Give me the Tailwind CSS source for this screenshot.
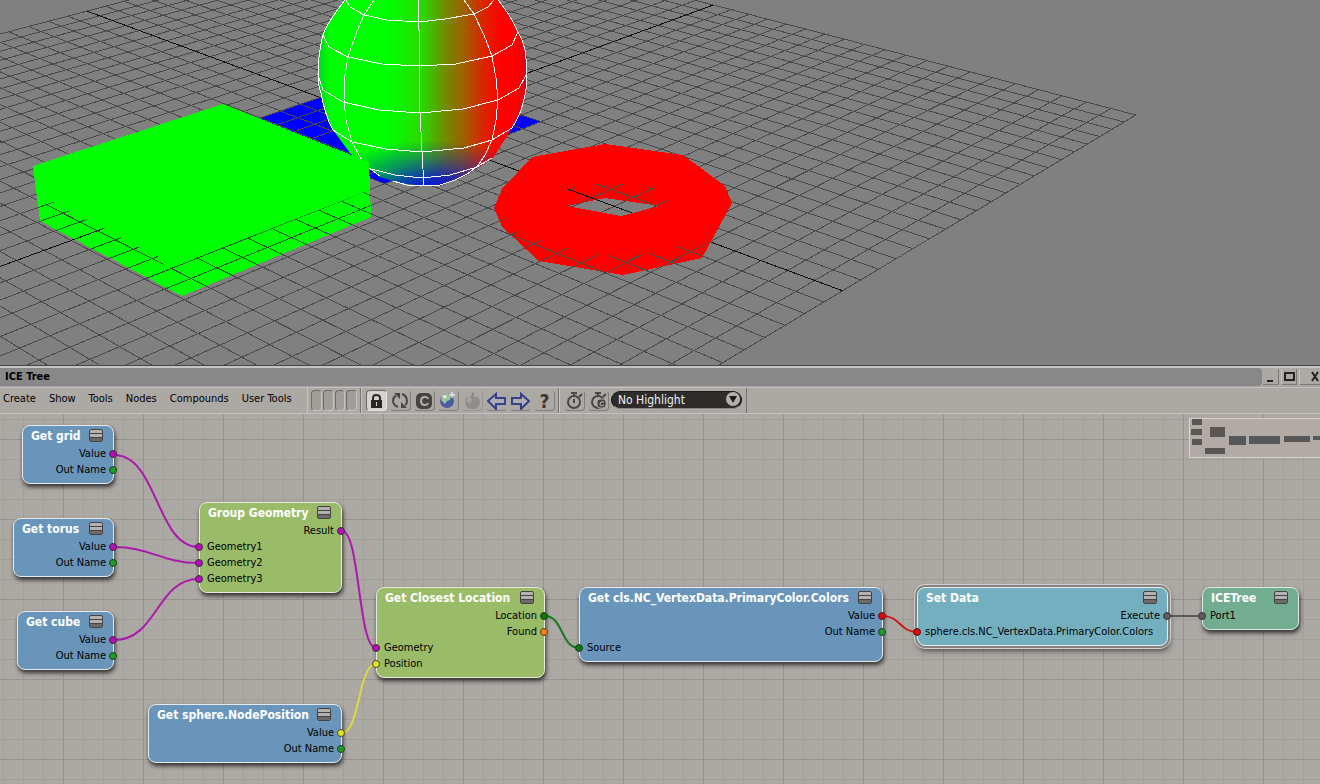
<!DOCTYPE html>
<html lang="en">
<head>
    <meta charset="UTF-8">
    <meta name="viewport" content="width=device-width, initial-scale=1.0">
    <title>ICE Tree</title>
    <script src="https://cdn.jsdelivr.net/npm/@tailwindcss/browser@4"></script>
</head>
<body class="min-h-screen flex flex-col bg-[#aca8a4] font-['DejaVu_Sans_Condensed','DejaVu_Sans',sans-serif] text-[11px] leading-4 text-black overflow-hidden">

    <!-- 3D viewport -->
    <section class="h-[365px] shrink-0 bg-[#808080] overflow-hidden">
        <svg class="block w-full h-full" role="img" aria-label="3D viewport">
            <defs>
                <linearGradient id="sphereSide" gradientUnits="userSpaceOnUse" x1="318" y1="0" x2="527" y2="0">
                    <stop offset="0" stop-color="#00d820"/>
                    <stop offset="0.06" stop-color="#00ff00"/>
                    <stop offset="0.34" stop-color="#00ff00"/>
                    <stop offset="0.5" stop-color="#2cd800"/>
                    <stop offset="0.6" stop-color="#6c9000"/>
                    <stop offset="0.7" stop-color="#a05f00"/>
                    <stop offset="0.8" stop-color="#e02000"/>
                    <stop offset="0.88" stop-color="#ff0000"/>
                    <stop offset="0.95" stop-color="#ff0000"/>
                    <stop offset="1" stop-color="#d80018"/>
                </linearGradient>
                <radialGradient id="sphereBottom" gradientUnits="userSpaceOnUse" cx="0" cy="0" r="1" gradientTransform="translate(430 194) scale(112 54)">
                    <stop offset="0" stop-color="#0000ff" stop-opacity="1"/>
                    <stop offset="0.25" stop-color="#0000f0" stop-opacity="0.8"/>
                    <stop offset="0.6" stop-color="#0000e8" stop-opacity="0.38"/>
                    <stop offset="1" stop-color="#0000e0" stop-opacity="0"/>
                </radialGradient>
                <clipPath id="overlay">
                    <!-- ground plane -->
                    <polygon points="395,72 541,122 385,184 239,125"/>
                    <!-- lower rim of the torus, and the far rim of its hole -->
                    <polygon points="497,212 520,232 567,248 600,255 643,255 680,246 708,243 702,258 623,275 539,261 502,227"/>
                    <polygon points="567,188 597,184 625,184 653,188 668,201 660,206 605,198 567,206"/>
                </clipPath>
                <clipPath id="holeClip"><polygon points="567,186 625,184 660,206 621,216 567,206"/></clipPath>
                <clipPath id="cubeFoot"><polygon points="38,206 53,202 159,257 167,269 370,190 371,217 182,296 39,221"/></clipPath>
            </defs>

            <g shape-rendering="crispEdges" fill="none">
                <path data-grid stroke="#4a4a4a"/>
                <path data-axes stroke="#101010"/>
            </g>
            <g shape-rendering="crispEdges">
                <polygon points="395,72 541,122 385,184 239,125" fill="#0000ff"/>
                <path fill="#ff0000" fill-rule="evenodd" d="M605 144 683 155 725 186 732 203 702 258 623 275 539 261 502 227 494 208 502 189 532 157ZM567 206 605 198 660 206 621 216Z"/>
            </g>
            <g clip-path="url(#overlay)" shape-rendering="crispEdges" fill="none">
                <path data-grid stroke="#4a4a4a"/>
            </g>
            <g clip-path="url(#holeClip)" shape-rendering="crispEdges" fill="none">
                <path data-axes stroke="#101010"/>
            </g>

            <g>
                <path fill="url(#sphereSide)" d="M345 0C334 14 326 26 323 35 319 50 318 62 318 75 318 84 319 88 321 93 324 110 328 121 333 130L350 153 369 168 380 177 400 183 423 186 440 186 467 175 493 158 512 128C516 121 519 116 521 110 525 98 527 88 527 77 527 66 526 58 525 50 523 42 521 37 518 32 513 20 507 11 498 0Z"/>
                <path fill="url(#sphereBottom)" d="M345 0C334 14 326 26 323 35 319 50 318 62 318 75 318 84 319 88 321 93 324 110 328 121 333 130L350 153 369 168 380 177 400 183 423 186 440 186 467 175 493 158 512 128C516 121 519 116 521 110 525 98 527 88 527 77 527 66 526 58 525 50 523 42 521 37 518 32 513 20 507 11 498 0Z"/>
                <g fill="none" stroke="#ffffff" shape-rendering="crispEdges">
                    <path d="M345 0C334 14 326 26 323 35 319 50 318 62 318 75 318 84 319 88 321 93 324 110 328 121 333 130"/>
                    <path d="M498 0C507 11 513 20 518 32 521 37 523 42 525 50 526 58 527 66 527 77 527 88 525 98 521 110 519 116 516 121 512 128"/>
                    <path d="M369 168 380 176M393 181 407 185 423 186 440 185 455 180 467 174 478 166 492 158"/>
                    <path d="M418 0 419 30 419 66 420 112 422 152 424 186"/>
                    <path d="M374 0 364 15 357 31 348 57 345 75 344 100 346 120 352 142 360 157 369 169"/>
                    <path d="M464 0 474 14 484 35 492 56 496 78 498 99 496 120 492 140 485 155 477 167"/>
                    <path d="M346 0 350 7 364 15 387 20 419 22 445 19 474 14 488 7 494 0"/>
                    <path d="M323 35 329 47 348 57 382 64 419 66 456 64 492 56 512 45 518 32"/>
                    <path d="M318 75 323 90 343 102 379 110 420 113 463 109 498 100 519 88 526 75"/>
                    <path d="M333 130 352 142 386 149 422 152 464 148 492 140 512 128"/>
                    <path d="M371 169 395 175 422 178 450 175 477 167 492 158"/>
                </g>
            </g>
            <polygon points="33,166 223,104 369,162 371,217 182,296 40,221" fill="#00ff00" shape-rendering="crispEdges"/>
            <g clip-path="url(#cubeFoot)" shape-rendering="crispEdges" fill="none">
                <path data-grid stroke="#2c5a2c"/>
                <path data-axes stroke="#101010"/>
            </g>
        </svg>
    </section>

    <!-- ICE Tree window -->
    <main class="flex-1 flex flex-col border-t border-[#4a4648]">
        <header class="flex h-[21px] shrink-0 border-t-2 border-b border-t-[#c6c3c0] border-b-[#a5a19e]">
            <h1 class="flex-1 bg-[#888888] rounded-r pl-[5px] font-bold leading-[17px]">ICE Tree</h1>
            <div class="flex gap-[2px] pl-px py-px">
                <button aria-label="Minimize" class="w-[16px] border-r border-b border-[#7d7976]">
                    <svg class="block" width="14" height="15"><path d="M4 12h6" stroke="#222" stroke-width="2"/></svg>
                </button>
                <button aria-label="Maximize" class="w-[16px] border-r border-b border-l border-[#7d7976] border-l-[#c6c3c0]">
                    <svg class="block" width="14" height="15"><path d="M3 4h9v7h-9z" fill="none" stroke="#222" stroke-width="2"/></svg>
                </button>
                <button aria-label="Close" class="w-[21px] border-l border-b border-[#7d7976] border-l-[#c6c3c0]">
                    <svg class="block" width="20" height="15"><path d="M12 3l6 9M18 3l-6 9" stroke="#222" stroke-width="2"/></svg>
                </button>
            </div>
        </header>

        <div class="flex h-[27px] shrink-0 border-t border-b border-[#c4c1be]">
            <nav class="flex w-[307px] shrink-0 gap-[13px] pl-[3px] pt-[3px]">
                <button class="h-4">Create</button>
                <button class="h-4">Show</button>
                <button class="h-4">Tools</button>
                <button class="h-4">Nodes</button>
                <button class="h-4">Compounds</button>
                <button class="h-4">User Tools</button>
            </nav>

            <div class="flex gap-px px-[3px] py-[2px] w-[54px] shrink-0 border-l border-r border-l-[#c8c5c2] border-r-[#76726f]">
                <button aria-label="Memo 1" class="flex-1 rounded-sm border border-[#6f6c69] border-r-[#c8c5c2] border-b-[#c8c5c2] bg-[#a19d99]"></button>
                <button aria-label="Memo 2" class="flex-1 rounded-sm border border-[#6f6c69] border-r-[#c8c5c2] border-b-[#c8c5c2] bg-[#a19d99]"></button>
                <button aria-label="Memo 3" class="flex-1 rounded-sm border border-[#6f6c69] border-r-[#c8c5c2] border-b-[#c8c5c2] bg-[#a19d99]"></button>
                <button aria-label="Memo 4" class="flex-1 rounded-sm border border-[#6f6c69] border-r-[#c8c5c2] border-b-[#c8c5c2] bg-[#a19d99]"></button>
            </div>

            <div class="flex gap-[3px] pl-[4px] pt-[2px] w-[198px] shrink-0 border-l border-r border-l-[#c8c5c2] border-r-[#76726f]">
                <button aria-label="Lock" class="size-[21px] rounded border border-[#6b6865] border-r-[#e6e4e2] border-b-[#e6e4e2] bg-[#d6d2cf]">
                    <svg class="block" width="19" height="19"><path d="M4 9h11v8H4z" fill="#2a2827"/><path d="M6 9V7q0-3 3-3 4 0 4 3v2" fill="none" stroke="#2a2827" stroke-width="2"/><path d="M9 11h1v4H9z" fill="#d6d2cf"/></svg>
                </button>
                <button aria-label="Refresh" class="size-[21px] rounded border border-transparent border-r-[#827e7b] border-b-[#827e7b]">
                    <svg class="block" width="19" height="19"><path d="M7 16Q2 14 2 10 2 6 5 5M11 3q5 2 5 7 0 3-2 4" fill="none" stroke="#4a4745" stroke-width="2"/><path d="M3 2h6v6zM16 17h-6v-6z" fill="#4a4745"/></svg>
                </button>
                <button aria-label="Clear" class="size-[21px] rounded border border-transparent border-r-[#827e7b] border-b-[#827e7b]">
                    <svg class="block" width="19" height="19"><rect x="1" y="2" width="16" height="16" rx="5" fill="#464341"/><path d="M13 8c-1-3-7-3-7 2s6 5 7 2" fill="none" stroke="#b2aeab" stroke-width="2"/></svg>
                </button>
                <button aria-label="Online" class="size-[21px] rounded border border-transparent border-r-[#827e7b] border-b-[#827e7b]">
                    <svg class="block" width="19" height="19"><circle cx="8" cy="10" r="7" fill="#4a5c9c"/><path d="M3 5q5-4 9 0l-1 4-3 1-2 3-4-4z" fill="#9bc49a"/><path d="M3 5q3-2 5 0l-2 3z" fill="#dcebd8"/><path d="M13 1v6M10 4h6" stroke="#fff"/></svg>
                </button>
                <button aria-label="Favorites" disabled class="size-[21px] rounded border border-transparent border-r-[#9a9693] border-b-[#9a9693]">
                    <svg class="block" width="19" height="19"><path d="M9 6Q2 4 2 10q0 7 6 8h3q6-1 6-8-1-6-8-4z" fill="#918d8a"/><path d="M9 7q0-4 2-5" fill="none" stroke="#8a8683" stroke-width="2"/><circle cx="6" cy="9" r="3" fill="#a39f9c"/></svg>
                </button>
                <button aria-label="Back" class="size-[21px] rounded border border-transparent border-b-[#827e7b]">
                    <svg class="block" width="19" height="19"><path d="M1 10l8-7v4h9v6H9v5z" fill="#aeacb4" stroke="#34408c" stroke-width="2"/></svg>
                </button>
                <button aria-label="Forward" class="size-[21px] rounded border border-transparent border-b-[#827e7b]">
                    <svg class="block" width="19" height="19"><path d="M18 10l-8-7v4H1v6h9v5z" fill="#aeacb4" stroke="#34408c" stroke-width="2"/></svg>
                </button>
                <button aria-label="Help" class="size-[21px] rounded border border-transparent border-r-[#827e7b] border-b-[#827e7b] text-[19px] leading-5 font-bold text-[#3c3937]">?</button>
            </div>

            <div class="flex pl-[4px] pt-[2px] w-[188px] shrink-0 border-l border-r border-l-[#c8c5c2] border-r-[#76726f]">
                <button aria-label="Timer" class="size-[21px] mr-[3px] rounded border border-transparent border-r-[#827e7b] border-b-[#827e7b]">
                    <svg class="block" width="19" height="19" fill="none" stroke="#4a4745"><circle cx="9" cy="11" r="6" stroke-width="2"/><path d="M9 12V8M9 5V2M6 2h6M14 6l3-3" stroke-width="2"/></svg>
                </button>
                <button aria-label="Clear timers" class="size-[21px] mr-[2px] rounded border border-transparent border-r-[#827e7b] border-b-[#827e7b]">
                    <svg class="block" width="19" height="19" fill="none" stroke="#4a4745"><circle cx="9" cy="11" r="6" stroke-width="2"/><path d="M9 5V2M6 2h6M14 6l3-3" stroke-width="2"/><rect x="8" y="8" width="9" height="9" rx="3" fill="#464341" stroke="#aca8a4"/><path d="M15 11q-4-1-4 2t4 1" stroke="#c2bebb"/></svg>
                </button>
                <div class="relative h-[18px] w-[131px] mt-px">
                    <select aria-label="Highlight" class="appearance-none block w-full h-full rounded-full bg-[#2e2c2b] border border-[#1a1918] border-b-[#8a8683] pl-[6px] pt-px text-[12px] leading-[15px] text-[#f0f0f0]">
                        <option>No Highlight</option>
                    </select>
                    <svg class="absolute right-px top-px pointer-events-none" width="15" height="15"><circle cx="7" cy="7" r="7" fill="#b4b0ad"/><path d="M3 4h8l-4 7z" fill="#1f1d1c"/></svg>
                </div>
            </div>
        </div>

        <!-- node graph -->
        <div class="relative flex-1 min-h-[370px] overflow-hidden">
            <svg class="absolute inset-0 w-full h-full">
                <defs>
                    <pattern id="minor" width="20" height="20" x="3" y="5" patternUnits="userSpaceOnUse"><path d="M0 0h20v1H1v19H0z" fill="#a29e9a"/></pattern>
                    <pattern id="major" width="80" height="80" x="63" y="25" patternUnits="userSpaceOnUse"><path d="M0 0h80v1H1v79H0z" fill="#959390"/></pattern>
                </defs>
                <rect width="100%" height="100%" fill="url(#minor)"/>
                <rect width="100%" height="100%" fill="url(#major)"/>
                <g fill="none" stroke-width="2">
                    <g stroke="#ab1bab">
                        <path d="M114 41C158 41 156 133 199 133"/>
                        <path d="M114 133C150 133 162 149 199 149"/>
                        <path d="M114 226C158 226 156 165 199 165"/>
                        <path d="M342 117C360 117 358 234 376 234"/>
                    </g>
                    <path d="M342 319C360 319 358 250 376 250" stroke="#dada3a"/>
                    <path d="M545 202C563 202 561 234 579 234" stroke="#1c7a24"/>
                    <path d="M883 202C900 202 900 218 917 218" stroke="#cc1a1a"/>
                    <path d="M1168 202H1202" stroke="#5c5a58"/>
                </g>
            </svg>

            <article class="absolute left-[22px] top-[11px] w-[92px] rounded-lg border border-[#e4eaee] bg-[#6895b9] shadow-[1px_3px_4px_#000000b0] pb-[5px]">
                <header class="flex justify-between items-start h-5 pt-[2px] pl-[8px] pr-[10px]"><h2 class="text-[12px] font-bold text-white whitespace-nowrap">Get grid</h2><svg class="shrink-0 mt-px" width="14" height="13"><use href="#menu"/></svg></header>
                <p class="relative h-4 pr-[7px] text-right">Value<i class="absolute -right-1 top-1 size-2 rounded-full border border-[#3c303c] bg-[#b80cb8]"></i></p>
                <p class="relative h-4 pr-[7px] text-right">Out Name<i class="absolute -right-1 top-1 size-2 rounded-full border border-[#234023] bg-[#1f9c28]"></i></p>
            </article>

            <article class="absolute left-[13px] top-[104px] w-[101px] rounded-lg border border-[#e4eaee] bg-[#6895b9] shadow-[1px_3px_4px_#000000b0] pb-[5px]">
                <header class="flex justify-between items-start h-5 pt-[2px] pl-[8px] pr-[10px]"><h2 class="text-[12px] font-bold text-white whitespace-nowrap">Get torus</h2><svg class="shrink-0 mt-px" width="14" height="13"><use href="#menu"/></svg></header>
                <p class="relative h-4 pr-[7px] text-right">Value<i class="absolute -right-1 top-1 size-2 rounded-full border border-[#3c303c] bg-[#b80cb8]"></i></p>
                <p class="relative h-4 pr-[7px] text-right">Out Name<i class="absolute -right-1 top-1 size-2 rounded-full border border-[#234023] bg-[#1f9c28]"></i></p>
            </article>

            <article class="absolute left-[17px] top-[197px] w-[97px] rounded-lg border border-[#e4eaee] bg-[#6895b9] shadow-[1px_3px_4px_#000000b0] pb-[5px]">
                <header class="flex justify-between items-start h-5 pt-[2px] pl-[8px] pr-[10px]"><h2 class="text-[12px] font-bold text-white whitespace-nowrap">Get cube</h2><svg class="shrink-0 mt-px" width="14" height="13"><use href="#menu"/></svg></header>
                <p class="relative h-4 pr-[7px] text-right">Value<i class="absolute -right-1 top-1 size-2 rounded-full border border-[#3c303c] bg-[#b80cb8]"></i></p>
                <p class="relative h-4 pr-[7px] text-right">Out Name<i class="absolute -right-1 top-1 size-2 rounded-full border border-[#234023] bg-[#1f9c28]"></i></p>
            </article>

            <article class="absolute left-[199px] top-[88px] w-[143px] rounded-lg border border-[#e6ecdc] bg-[#9abb68] shadow-[1px_3px_4px_#000000b0] pb-[5px]">
                <header class="flex justify-between items-start h-5 pt-[2px] pl-[8px] pr-[10px]"><h2 class="text-[12px] font-bold text-white whitespace-nowrap">Group Geometry</h2><svg class="shrink-0 mt-px" width="14" height="13"><use href="#menu"/></svg></header>
                <p class="relative h-4 pr-[7px] text-right">Result<i class="absolute -right-1 top-1 size-2 rounded-full border border-[#3c303c] bg-[#b80cb8]"></i></p>
                <p class="relative h-4 pl-[7px]">Geometry1<i class="absolute -left-[5px] top-1 size-2 rounded-full border border-[#3c303c] bg-[#b80cb8]"></i></p>
                <p class="relative h-4 pl-[7px]">Geometry2<i class="absolute -left-[5px] top-1 size-2 rounded-full border border-[#3c303c] bg-[#b80cb8]"></i></p>
                <p class="relative h-4 pl-[7px]">Geometry3<i class="absolute -left-[5px] top-1 size-2 rounded-full border border-[#3c303c] bg-[#b80cb8]"></i></p>
            </article>

            <article class="absolute left-[148px] top-[290px] w-[194px] rounded-lg border border-[#e4eaee] bg-[#6895b9] shadow-[1px_3px_4px_#000000b0] pb-[5px]">
                <header class="flex justify-between items-start h-5 pt-[2px] pl-[8px] pr-[10px]"><h2 class="text-[12px] font-bold text-white whitespace-nowrap">Get sphere.NodePosition</h2><svg class="shrink-0 mt-px" width="14" height="13"><use href="#menu"/></svg></header>
                <p class="relative h-4 pr-[7px] text-right">Value<i class="absolute -right-1 top-1 size-2 rounded-full border border-[#4a4a30] bg-[#e4e424]"></i></p>
                <p class="relative h-4 pr-[7px] text-right">Out Name<i class="absolute -right-1 top-1 size-2 rounded-full border border-[#234023] bg-[#1f9c28]"></i></p>
            </article>

            <article class="absolute left-[376px] top-[173px] w-[169px] rounded-lg border border-[#e6ecdc] bg-[#9abb68] shadow-[1px_3px_4px_#000000b0] pb-[5px]">
                <header class="flex justify-between items-start h-5 pt-[2px] pl-[8px] pr-[10px]"><h2 class="text-[12px] font-bold text-white whitespace-nowrap">Get Closest Location</h2><svg class="shrink-0 mt-px" width="14" height="13"><use href="#menu"/></svg></header>
                <p class="relative h-4 pr-[7px] text-right">Location<i class="absolute -right-1 top-1 size-2 rounded-full border border-[#234023] bg-[#0c780c]"></i></p>
                <p class="relative h-4 pr-[7px] text-right">Found<i class="absolute -right-1 top-1 size-2 rounded-full border border-[#5a4030] bg-[#f8800c]"></i></p>
                <p class="relative h-4 pl-[7px]">Geometry<i class="absolute -left-[5px] top-1 size-2 rounded-full border border-[#3c303c] bg-[#b80cb8]"></i></p>
                <p class="relative h-4 pl-[7px]">Position<i class="absolute -left-[5px] top-1 size-2 rounded-full border border-[#4a4a30] bg-[#e4e424]"></i></p>
            </article>

            <article class="absolute left-[579px] top-[173px] w-[304px] rounded-lg border border-[#e4eaee] bg-[#6895b9] shadow-[1px_3px_4px_#000000b0] pb-[5px]">
                <header class="flex justify-between items-start h-5 pt-[2px] pl-[8px] pr-[10px]"><h2 class="text-[12px] font-bold text-white whitespace-nowrap">Get cls.NC_VertexData.PrimaryColor.Colors</h2><svg class="shrink-0 mt-px" width="14" height="13"><use href="#menu"/></svg></header>
                <p class="relative h-4 pr-[7px] text-right">Value<i class="absolute -right-1 top-1 size-2 rounded-full border border-[#502020] bg-[#e00808]"></i></p>
                <p class="relative h-4 pr-[7px] text-right">Out Name<i class="absolute -right-1 top-1 size-2 rounded-full border border-[#234023] bg-[#1f9c28]"></i></p>
                <p class="relative h-4 pl-[7px]">Source<i class="absolute -left-[5px] top-1 size-2 rounded-full border border-[#234023] bg-[#0c780c]"></i></p>
            </article>

            <!-- selected node -->
            <article class="absolute left-[917px] top-[173px] w-[251px] rounded-lg border border-[#e4eef0] bg-[#74afc0] outline outline-offset-2 outline-[#d4d2d0] shadow-[0_0_0_2px_#85827f,1px_4px_6px_#000000b0] pb-[5px]">
                <header class="flex justify-between items-start h-5 pt-[2px] pl-[8px] pr-[10px]"><h2 class="text-[12px] font-bold text-white whitespace-nowrap">Set Data</h2><svg class="shrink-0 mt-px" width="14" height="13"><use href="#menu"/></svg></header>
                <p class="relative h-4 pr-[7px] text-right">Execute<i class="absolute -right-1 top-1 size-2 rounded-full border border-[#383838] bg-[#5c5c5c]"></i></p>
                <p class="relative h-4 pl-[7px] whitespace-nowrap">sphere.cls.NC_VertexData.PrimaryColor.Colors<i class="absolute -left-[5px] top-1 size-2 rounded-full border border-[#502020] bg-[#e00808]"></i></p>
            </article>

            <article class="absolute left-[1202px] top-[173px] w-[97px] rounded-lg border border-[#dcece4] bg-[#72ad91] shadow-[1px_3px_4px_#000000b0] pb-[5px]">
                <header class="flex justify-between items-start h-5 pt-[2px] pl-[8px] pr-[10px]"><h2 class="text-[12px] font-bold text-white whitespace-nowrap">ICETree</h2><svg class="shrink-0 mt-px" width="14" height="13"><use href="#menu"/></svg></header>
                <p class="relative h-4 pl-[7px]">Port1<i class="absolute -left-[5px] top-1 size-2 rounded-full border border-[#383838] bg-[#5c5c5c]"></i></p>
            </article>

            <!-- navigator -->
            <svg class="absolute right-0 top-1 w-[131px] h-10" role="img" aria-label="Graph overview">
                <rect x="0.5" y="0.5" width="140" height="39" fill="#b2aaa5" stroke="#d4d2d0"/>
                <path fill="#595755" d="M3 1h10v6h-10zM2 11h11v6h-11zM3 21h10v6h-10zM21 9h15v10h-15zM16 30h20v6h-20zM40 18h17v9h-17zM60 18h31v8h-31zM95 18h26v6h-26zM124 18h7v4h-7z"/>
            </svg>
        </div>
    </main>

    <svg class="hidden">
        <symbol id="menu" viewBox="0 0 14 13">
            <rect x="0.5" y="0.5" width="13" height="12" rx="1.5" fill="#b4b2b0" stroke="#454341"/>
            <path d="M1 8h12v4H1z" fill="#6c6a68"/>
            <path d="M1 4.5h12M1 8.5h12" stroke="#454341"/>
        </symbol>
    </svg>

    <script>
        // perspective of the floor: s and t run from -1 to 1 along the two axes
        function project(s, t) {
            const w = 1 - 0.197 * s + 0.207 * t;
            const x = (286.3 * s + 470.7 * t + 390.3) / w;
            const y = (110.1 * s - 117.4 * t + 123.4) / w;
            return x.toFixed(1) + ' ' + y.toFixed(1);
        }

        function line(a, b) {
            return 'M' + project(a[0], a[1]) + 'L' + project(b[0], b[1]);
        }

        let grid = '';
        for (let i = -20; i <= 20; i++) {
            if (i === 0) continue;
            const k = i / 20;
            grid += line([k, -1], [k, 1]) + line([-1, k], [1, k]);
        }
        const axes = line([0, -1], [0, 1]) + line([-1, 0], [1, 0]);

        document.querySelectorAll('[data-grid]').forEach(p => p.setAttribute('d', grid));
        document.querySelectorAll('[data-axes]').forEach(p => p.setAttribute('d', axes));
    </script>
</body>
</html>
